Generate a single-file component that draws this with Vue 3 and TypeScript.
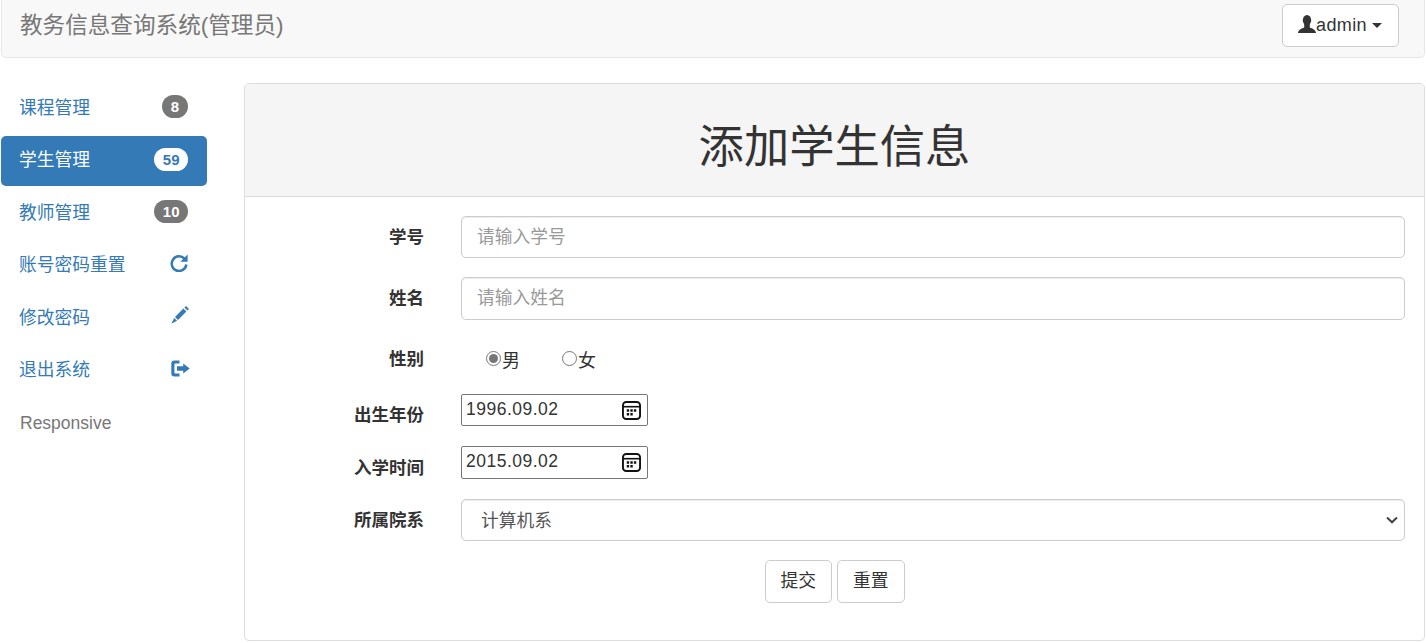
<script setup lang="ts">
import { ref } from 'vue'

interface NavItem { label: string; badge?: string; icon?: 'refresh' | 'pencil' | 'logout'; active?: boolean }

const items: NavItem[] = [
  { label: '课程管理', badge: '8' },
  { label: '学生管理', badge: '59', active: true },
  { label: '教师管理', badge: '10' },
  { label: '账号密码重置', icon: 'refresh' },
  { label: '修改密码', icon: 'pencil' },
  { label: '退出系统', icon: 'logout' }
]

const sex = ref('男')
</script>

<template>
  <div class="page">
    <header class="navbar">
      <span class="brand">教务信息查询系统(管理员)</span>
      <button class="user-btn" type="button">
        <svg class="user-icon" viewBox="0 0 18 18" aria-hidden="true">
          <ellipse cx="9" cy="5.3" rx="4.2" ry="5.3" />
          <path d="M0 18c.3-3.6 3.6-4.4 6.2-5.600V9h5.600v3.400c2.600 1.200 5.900 2 6.200 5.600z" />
        </svg>
        <span class="user-name">admin</span>
        <i class="caret"></i>
      </button>
    </header>

    <div class="body">
      <nav class="side">
        <a v-for="item in items" :key="item.label" class="side-item" :class="{ active: item.active }">
          <span>{{ item.label }}</span>
          <span v-if="item.badge" class="badge">{{ item.badge }}</span>
          <svg v-else-if="item.icon === 'refresh'" class="glyph glyph-refresh" viewBox="0 0 18 18" aria-hidden="true">
            <path d="M14.600 4.900A7.300 7.300 0 1 0 16.300 10.500" fill="none" stroke="currentColor" stroke-width="2.500" />
            <path d="M17.600 .6v7.200h-7.200z" fill="currentColor" />
          </svg>
          <svg v-else-if="item.icon === 'pencil'" class="glyph glyph-pen" viewBox="0 0 18 18" aria-hidden="true">
            <path d="M4 11 12.400 2.600l3 3L7 14zM3.200 11.900l2.900 2.900L.3 17.700zM13.400 1.600 15 0l3 3-1.600 1.600z" fill="currentColor" />
          </svg>
          <svg v-else class="glyph glyph-out" viewBox="0 0 19 17" aria-hidden="true">
            <path d="M8.500 .5H3.500A3.200 3.200 0 0 0 .3 3.700v9.600a3.200 3.200 0 0 0 3.200 3.200h5v-3H4.400a1 1 0 0 1-1-1V4.500a1 1 0 0 1 1-1h4.100z" fill="currentColor" />
            <path d="M6 6.300h6.200V3.400l6.500 5.100-6.500 5.100v-2.900H6z" fill="currentColor" />
          </svg>
        </a>
        <a class="side-item plain">Responsive</a>
      </nav>

      <main class="panel">
        <h1 class="panel-title">添加学生信息</h1>
        <form class="form" @submit.prevent>
          <div class="row">
            <label class="label">学号</label>
            <input class="control" type="text" placeholder="请输入学号" />
          </div>
          <div class="row">
            <label class="label">姓名</label>
            <input class="control" type="text" placeholder="请输入姓名" />
          </div>
          <div class="row row-radio">
            <label class="label">性别</label>
            <div class="radios">
              <label class="radio"><input v-model="sex" type="radio" name="sex" value="男" /><span>男</span></label>
              <label class="radio"><input v-model="sex" type="radio" name="sex" value="女" /><span>女</span></label>
            </div>
          </div>
          <div class="row row-date">
            <label class="label">出生年份</label>
            <div class="date">
              <input class="date-input" type="text" value="1996.09.02" />
              <svg class="cal" viewBox="0 0 20 20" aria-hidden="true">
                <rect x="1" y="1" width="18" height="18" rx="3.500" />
                <path class="cal-line" d="M1 6h18" />
                <path class="cal-dots" d="M5 8.800h2.500v2.500H5zM8.800 8.800h2.500v2.500H8.800zM12.500 8.800H15v2.500h-2.500zM5 12.700h2.500v2.500H5zM8.800 12.700h2.500v2.500H8.800z" />
              </svg>
            </div>
          </div>
          <div class="row row-date">
            <label class="label">入学时间</label>
            <div class="date">
              <input class="date-input" type="text" value="2015.09.02" />
              <svg class="cal" viewBox="0 0 20 20" aria-hidden="true">
                <rect x="1" y="1" width="18" height="18" rx="3.500" />
                <path class="cal-line" d="M1 6h18" />
                <path class="cal-dots" d="M5 8.800h2.500v2.500H5zM8.800 8.800h2.500v2.500H8.800zM12.500 8.800H15v2.500h-2.500zM5 12.700h2.500v2.500H5zM8.800 12.700h2.500v2.500H8.800z" />
              </svg>
            </div>
          </div>
          <div class="row row-select">
            <label class="label">所属院系</label>
            <div class="select-wrap">
              <select class="control select">
                <option>计算机系</option>
              </select>
              <svg class="chevron" viewBox="0 0 12 8" aria-hidden="true">
                <path d="M1 1.500 6 6.300l5-4.800" />
              </svg>
            </div>
          </div>
          <div class="actions">
            <button class="btn" type="submit">提交</button>
            <button class="btn" type="reset">重置</button>
          </div>
        </form>
      </main>
    </div>
  </div>
</template>

<style>
html, body { margin: 0; background: #fff; }
</style>

<style scoped>
.page {
  font-family: "Liberation Sans", "Noto Sans CJK SC", sans-serif;
  font-size: 17.5px;
  line-height: 25px;
  color: #333;
  height: 643px;
  overflow: hidden;
}
.navbar {
  display: flex;
  align-items: flex-start;
  justify-content: space-between;
  height: 53px;
  margin: 0 1px;
  padding: 4px 25px 0 18px;
  background: #f8f8f8;
  border: 1px solid #e7e7e7;
  border-top: 0;
  border-radius: 0 0 5px 5px;
}
.brand {
  font-size: 22.600px;
  line-height: 44px;
  color: #777;
}
.user-btn {
  display: flex;
  align-items: center;
  width: 117px;
  height: 43px;
  padding: 0 15px;
  box-sizing: border-box;
  font: inherit;
  color: #333;
  background: #fff;
  border: 1px solid #ccc;
  border-radius: 5px;
}
.user-icon { width: 18px; height: 18px; margin-top: -3px; fill: #333; flex: none; }
.user-name { font-size: 18px; letter-spacing: .4px; }
.caret {
  margin-left: 5px;
  border-top: 5px solid #333;
  border-left: 5px solid transparent;
  border-right: 5px solid transparent;
}
.body {
  display: flex;
  align-items: flex-start;
  padding: 25px 1px 0 1px;
}
.side {
  display: flex;
  flex-direction: column;
  gap: 2.500px;
  width: 206px;
  flex: none;
  margin-right: 37px;
}
.side-item {
  display: flex;
  align-items: center;
  justify-content: space-between;
  height: 50px;
  padding: 0 19px 0 18px;
  box-sizing: border-box;
  font-size: 17.750px;
  color: #337ab7;
  border-radius: 5px;
}
.side-item.active { background: #337ab7; color: #fff; }
.side-item.plain { padding-left: 19px; font-size: 17.500px; color: #777; }
.badge {
  min-width: 26px;
  height: 23px;
  padding: 0 8.500px;
  box-sizing: border-box;
  margin-top: -3px;
  font-size: 15px;
  font-weight: 700;
  line-height: 23px;
  text-align: center;
  color: #fff;
  background: #777;
  border-radius: 12px;
}
.active .badge { background: #fff; color: #337ab7; }
.glyph { width: 18px; height: 18px; margin: -5px 0 0 0; flex: none; }
.glyph-refresh { margin-top: -6px; }
.glyph-pen { margin-top: -6px; margin-right: -1px; }
.glyph-out { width: 19px; height: 17px; margin-right: -2px; }
.panel {
  flex: 1;
  height: 558px;
  box-sizing: border-box;
  border: 1px solid #ddd;
  border-radius: 5px;
  overflow: hidden;
}
.panel-title {
  height: 113px;
  margin: 0;
  box-sizing: border-box;
  font-size: 45.300px;
  font-weight: 400;
  line-height: 128px;
  text-align: center;
  background: #f5f5f5;
  border-bottom: 1px solid #ddd;
}
.form {
  display: flex;
  flex-direction: column;
  gap: 18.750px;
  padding: 19px 19px 0;
}
.row {
  display: grid;
  grid-template-columns: 159px 1fr;
  column-gap: 38px;
  align-items: center;
}
.label {
  margin-right: -1px;
  font-size: 17.500px;
  font-weight: 700;
  text-align: right;
}
.control {
  display: block;
  width: 100%;
  height: 42.400px;
  padding: 1px 15px 0;
  box-sizing: border-box;
  font: inherit;
  font-size: 17.750px;
  color: #555;
  background: #fff;
  border: 1px solid #ccc;
  border-radius: 5px;
  box-shadow: inset 0 1px 1px rgba(0, 0, 0, .075);
}
.control::placeholder { color: #999; }
.select-wrap { position: relative; }
.select { padding: 3px 15px 0 19px; appearance: none; }
.row-select .label { padding-top: 2px; }
.chevron {
  position: absolute;
  top: 17px;
  right: 7px;
  width: 12px;
  height: 8px;
  fill: none;
  stroke: #444;
  stroke-width: 2;
  pointer-events: none;
}
.row-radio { height: 36.850px; }
.row-radio .label { padding-top: 6px; }
.radios { display: flex; gap: 42px; padding: 7px 0 0 25px; }
.radio { display: flex; align-items: center; font-size: 18px; }
.radio input {
  width: 15px;
  height: 15px;
  margin: 0 1px 4px 0;
  accent-color: #767676;
}
.radio span { padding-top: 2px; }
.row-date { height: 33.400px; align-items: start; }
.row-date .label { padding-top: 9.500px; }
.row-select { margin-top: .6px; }
.date {
  display: flex;
  align-items: center;
  width: 187px;
  height: 32.500px;
  padding: 0 6px 0 4px;
  box-sizing: border-box;
  background: #fff;
  border: 1px solid #767676;
  border-radius: 2px;
}
.date-input {
  flex: 1;
  min-width: 0;
  padding: 0 0 1px;
  font: inherit;
  letter-spacing: .5px;
  color: #333;
  background: transparent;
  border: 0;
  outline: 0;
}
.cal { width: 19px; height: 19px; flex: none; fill: none; stroke: #111; stroke-width: 2; }
.cal-line { stroke-width: 1.700; }
.cal-dots { fill: #111; stroke: none; }
.actions {
  display: flex;
  justify-content: center;
  gap: 5px;
}
.btn {
  width: 67.500px;
  height: 43px;
  padding: 0;
  font: inherit;
  font-size: 17.750px;
  color: #333;
  background: #fff;
  border: 1px solid #ccc;
  border-radius: 5px;
}
</style>
